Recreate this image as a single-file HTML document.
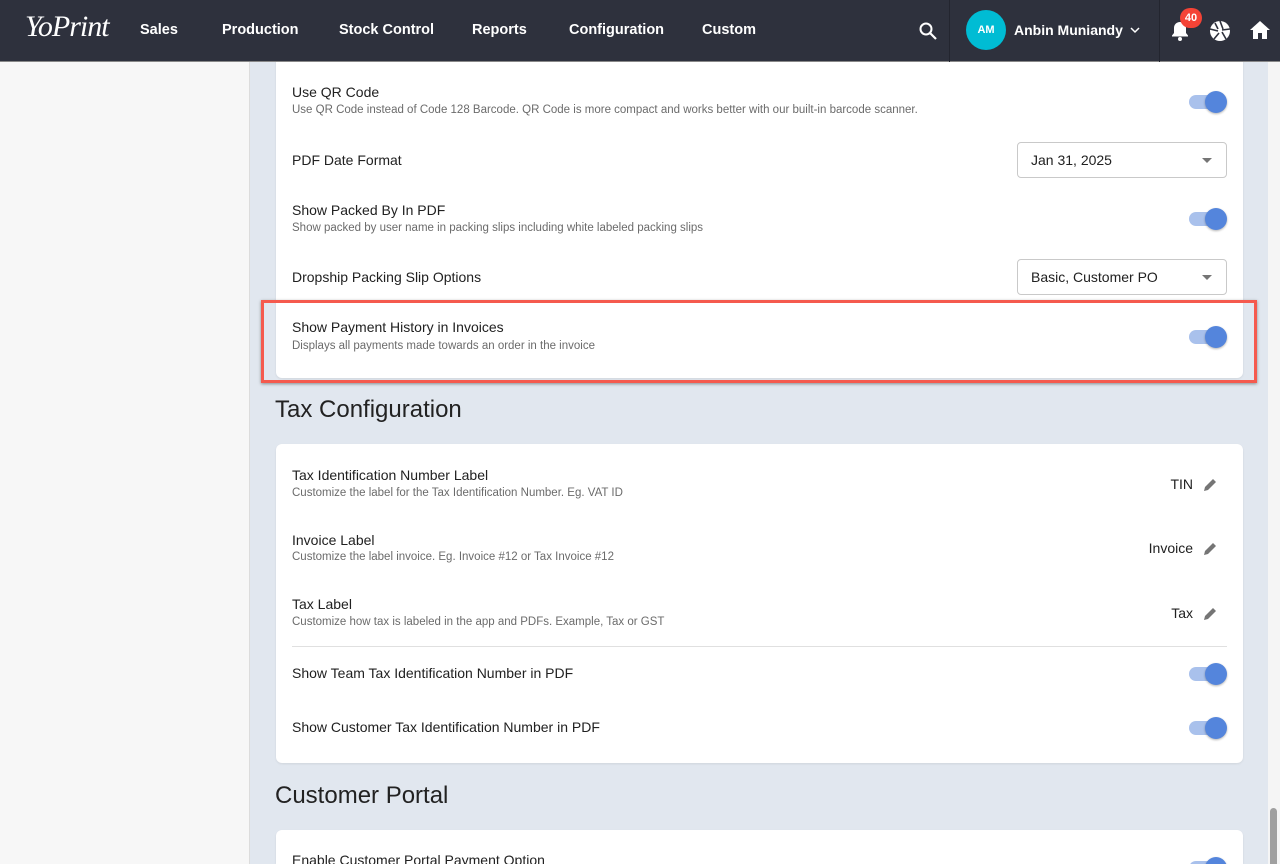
<!DOCTYPE html>
<html style="overflow:hidden;width:1280px;height:864px"><head><meta charset="utf-8"><style>
*{box-sizing:border-box;margin:0;padding:0}
body{width:1280px;height:864px;overflow:hidden;font-family:"Liberation Sans",Roboto,sans-serif;background:#e1e7ef;position:relative;color:#212121}
.nav{position:absolute;left:0;top:0;width:1280px;height:62px;background:#2e313d;border-bottom:1px solid #888;z-index:5}
.nav .it{position:absolute;top:22px;color:#fff;font-size:14.5px;font-weight:bold}
.side{position:absolute;left:0;top:62px;width:250px;height:802px;background:#f7f7f7;border-right:1px solid #dcdcdc}
.sb{position:absolute;left:1268px;top:62px;width:12px;height:802px;background:#f5f5f5}
.thumb{position:absolute;left:1270px;top:808px;width:7px;height:60px;border-radius:4px;background:#a0a0a0}
.card{position:absolute;left:276px;width:967px;background:#fff;border-radius:6px;box-shadow:0 1px 2px rgba(0,0,0,.08)}
.t{position:absolute;left:292px;font-size:14px;color:#212121;white-space:nowrap}
.d{position:absolute;left:292px;font-size:11.5px;color:#6b6b6b;white-space:nowrap}
.h{position:absolute;left:275px;font-size:24px;color:#222}
.tg{position:absolute;left:1189px;width:36px;height:14px;border-radius:7px;background:#a9c1ec}
.tg::after{content:"";position:absolute;left:16px;top:-4px;width:22px;height:22px;border-radius:50%;background:#5485dc;box-shadow:0 1px 2px rgba(0,0,0,.3)}
.sel{position:absolute;left:1017px;width:210px;height:36px;border:1px solid #c9c9c9;border-radius:4px;font-size:14px;padding:9px 13px}
.sel::after{content:"";position:absolute;right:14px;top:15px;border:5px solid transparent;border-top:5px solid #757575}
.v{position:absolute;font-size:14px;text-align:right;right:87px}
.pen{position:absolute;left:1202px}
</style></head><body>
<div class="nav">
<div style="position:absolute;left:25px;top:10px;color:#fff;font-family:'Liberation Serif',serif;font-style:italic;font-size:30px;letter-spacing:-1px">YoPrint</div>
<div class="it" style="left:140px">Sales</div>
<div class="it" style="left:222px">Production</div>
<div class="it" style="left:339px">Stock Control</div>
<div class="it" style="left:472px">Reports</div>
<div class="it" style="left:569px">Configuration</div>
<div class="it" style="left:702px">Custom</div>
<svg style="position:absolute;left:918px;top:21px" width="20" height="20" viewBox="0 0 20 20"><circle cx="8" cy="8" r="5.5" fill="none" stroke="#fff" stroke-width="2"/><path d="M12 12l6 6" stroke="#fff" stroke-width="2.2"/></svg>
<div style="position:absolute;left:949px;top:0;width:1px;height:62px;background:#23252f"></div>
<div style="position:absolute;left:966px;top:10px;width:40px;height:40px;border-radius:50%;background:#00bcd4;color:#fff;font-size:11px;font-weight:bold;text-align:center;line-height:40px">AM</div>
<div class="it" style="left:1014px;font-size:14px">Anbin Muniandy</div>
<svg style="position:absolute;left:1130px;top:26px" width="10" height="8"><path d="M1 2l4 4 4-4" stroke="#fff" stroke-width="1.5" fill="none"/></svg>
<div style="position:absolute;left:1159px;top:0;width:1px;height:62px;background:#23252f"></div>
<svg style="position:absolute;left:1170px;top:20px" width="20" height="22" viewBox="0 0 20 22"><path d="M10 2c-3.5 0-6 2.7-6 6v5l-2 2.5v1h16v-1L16 13V8c0-3.3-2.5-6-6-6z" fill="#fff"/><circle cx="10" cy="19" r="2" fill="#fff"/></svg>
<div style="position:absolute;left:1180px;top:8px;width:22px;height:20px;border-radius:10px;background:#f44336;color:#fff;font-size:11px;font-weight:bold;text-align:center;line-height:20px">40</div>
<svg style="position:absolute;left:1209px;top:20px" width="22" height="22" viewBox="0 0 22 22"><circle cx="11" cy="11" r="10" fill="#fff"/><g stroke="#2e313d" stroke-width="1.6"><path d="M11 1l3 8M21 9l-8 1M17 19l-4-7M5 19l5-6M1 9l8 2M6 3l3 6"/></g></svg>
<svg style="position:absolute;left:1249px;top:20px" width="22" height="20" viewBox="0 0 22 20"><path d="M11 1L1 10h3v9h5v-6h4v6h5v-9h3z" fill="#fff"/></svg>
</div>
<div class="side"></div>
<div class="sb"></div><div class="thumb"></div>

<div class="card" style="top:50px;height:328px"></div>
<div class="t" style="top:84px">Use QR Code</div>
<div class="d" style="top:104px">Use QR Code instead of Code 128 Barcode. QR Code is more compact and works better with our built-in barcode scanner.</div>
<div class="tg" style="top:95px"></div>
<div class="t" style="top:152px">PDF Date Format</div>
<div class="sel" style="top:142px">Jan 31, 2025</div>
<div class="t" style="top:202px">Show Packed By In PDF</div>
<div class="d" style="top:222px">Show packed by user name in packing slips including white labeled packing slips</div>
<div class="tg" style="top:212px"></div>
<div class="t" style="top:269px">Dropship Packing Slip Options</div>
<div class="sel" style="top:259px">Basic, Customer PO</div>
<div class="t" style="top:319px">Show Payment History in Invoices</div>
<div class="d" style="top:340px">Displays all payments made towards an order in the invoice</div>
<div class="tg" style="top:330px"></div>
<div style="position:absolute;left:261px;top:300px;width:996px;height:83px;border:3px solid #f55a4e;box-shadow:0 1px 3px rgba(0,0,0,.4)"></div>

<div class="h" style="top:396px">Tax Configuration</div>
<div class="card" style="top:444px;height:319px"></div>
<div class="t" style="top:467px">Tax Identification Number Label</div>
<div class="d" style="top:487px">Customize the label for the Tax Identification Number. Eg. VAT ID</div>
<div class="v" style="top:476px">TIN</div>
<div class="t" style="top:532px">Invoice Label</div>
<div class="d" style="top:551px">Customize the label invoice. Eg. Invoice #12 or Tax Invoice #12</div>
<div class="v" style="top:540px">Invoice</div>
<div class="t" style="top:596px">Tax Label</div>
<div class="d" style="top:616px">Customize how tax is labeled in the app and PDFs. Example, Tax or GST</div>
<div class="v" style="top:605px">Tax</div>
<svg class="pen" style="top:477px" width="16" height="16" viewBox="0 0 16 16"><path d="M2 14l1-4 8-8 3 3-8 8z" fill="#757575"/></svg>
<svg class="pen" style="top:541px" width="16" height="16" viewBox="0 0 16 16"><path d="M2 14l1-4 8-8 3 3-8 8z" fill="#757575"/></svg>
<svg class="pen" style="top:606px" width="16" height="16" viewBox="0 0 16 16"><path d="M2 14l1-4 8-8 3 3-8 8z" fill="#757575"/></svg>
<div style="position:absolute;left:292px;top:646px;width:935px;height:1px;background:#e0e0e0"></div>
<div class="t" style="top:665px">Show Team Tax Identification Number in PDF</div>
<div class="tg" style="top:667px"></div>
<div class="t" style="top:719px">Show Customer Tax Identification Number in PDF</div>
<div class="tg" style="top:721px"></div>

<div class="h" style="top:782px">Customer Portal</div>
<div class="card" style="top:830px;height:34px;border-radius:6px 6px 0 0"></div>
<div class="t" style="top:852px">Enable Customer Portal Payment Option</div>
<div style="position:absolute;left:1185px;top:855px;width:50px;height:9px;overflow:hidden"><div class="tg" style="left:4px;top:6px"></div></div>
</body></html>
